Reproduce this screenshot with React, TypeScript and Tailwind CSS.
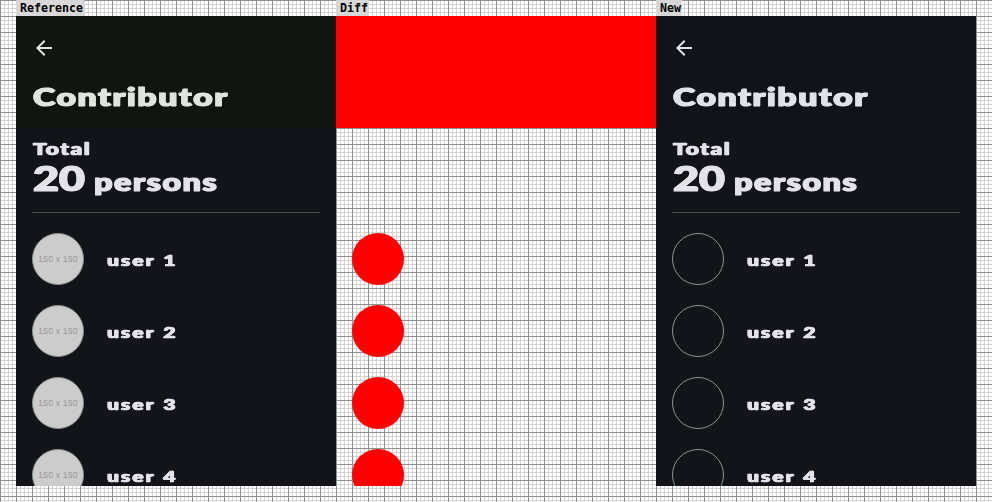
const GRID =
  "bg-[linear-gradient(90deg,#929292_1px,transparent_1px),linear-gradient(#929292_1px,transparent_1px),linear-gradient(90deg,#d4d4d4_1px,transparent_1px),linear-gradient(#d4d4d4_1px,transparent_1px)] bg-[size:16px_16px,16px_16px,4px_4px,4px_4px]";

const display =
  "block w-max origin-left whitespace-pre will-change-transform font-['Lato','Liberation_Sans',sans-serif] font-black";

const heavy =
  "[-webkit-text-stroke:1.2px_currentColor] [text-shadow:0.9px_0_currentColor,-0.5px_0_currentColor]";
const heavySmall =
  "[-webkit-text-stroke:0.7px_currentColor] [text-shadow:0.7px_0_currentColor,-0.4px_0_currentColor]";

function Label({ text }: { text: string }) {
  return (
    <div className="h-4 w-80">
      <span className="block h-4 w-max bg-[#d8d8d8] pl-1 pr-px font-['DejaVu_Sans_Mono',monospace] text-[11.63px] font-bold leading-[17px] text-black">
        {text}
      </span>
    </div>
  );
}

function Phone({ reference = false }: { reference?: boolean }) {
  const ink = reference ? "text-[#dfe4dc]" : "text-[#e1e2e9]";
  return (
    <section className="h-[470px] w-80 overflow-hidden bg-[#121419] text-[#e2e2e9]">
      <header className={`h-28 px-4 pt-5 ${ink} ${reference ? "bg-[#101510]" : "bg-[#101419]"}`}>
        <svg className="block h-6 w-6" viewBox="0 0 24 24" fill="currentColor">
          <path d="M20 11H7.83l5.59-5.59L12 4l-8 8 8 8 1.41-1.41L7.83 13H20z" />
        </svg>
        <h1 className={`${display} ${heavy} ml-px mt-[21px] scale-x-[1.36] text-[24.5px] leading-8 tracking-[1.35px]`}>
          Contributor
        </h1>
      </header>
      <div className="px-4 pt-3">
        <p className={`${display} ${heavySmall} ml-px h-4 scale-x-[1.4] text-[16px] leading-[18px] tracking-[1.3px]`}>Total</p>
        <div className="flex h-14 items-baseline">
          <div className="w-[61px]">
            <span className={`${display} ${heavy} ml-px scale-x-[1.33] text-[33.5px] leading-[44px]`}>20</span>
          </div>
          <span className={`${display} ${heavy} ml-px scale-x-[1.33] text-[24px] leading-8 tracking-[1.3px]`}>persons</span>
        </div>
        <div className="h-px bg-[#3f4947]" />
      </div>
      <ul className="pt-[20px]">
        {[1, 2, 3, 4].map((n) => (
          <li key={n} className="flex h-[72px] items-start px-4">
            <div
              className={`flex h-[52px] w-[52px] shrink-0 items-center justify-center rounded-full border border-[#89938f] ${reference ? "bg-[#cccccc]" : ""}`}
            >
              {reference && (
                <span className="whitespace-nowrap font-['Liberation_Sans',sans-serif] text-[8.6px] leading-none tracking-[0.2px] text-[#999999]">
                  150 x 150
                </span>
              )}
            </div>
            <span className={`${display} ${heavySmall} ml-[23px] mt-[17px] scale-x-[1.34] text-[15.5px] leading-5 tracking-[1.6px] [word-spacing:0.8px]`}>
              {`user ${n}`}
            </span>
          </li>
        ))}
      </ul>
    </section>
  );
}

function Diff() {
  return (
    <section className="h-[470px] w-80 overflow-hidden">
      <div className="h-28 bg-[#ff0000]" />
      <div className="flex flex-col gap-5 pl-4 pt-[105px]">
        {[1, 2, 3, 4].map((n) => (
          <div key={n} className="h-[52px] w-[52px] shrink-0 rounded-full bg-[#ff0000]" />
        ))}
      </div>
    </section>
  );
}

export default function App() {
  return (
    <main className={`h-[502px] w-[992px] overflow-hidden bg-white px-4 ${GRID}`}>
      <div className="flex">
        <Label text="Reference" />
        <Label text="Diff" />
        <Label text="New" />
      </div>
      <div className="flex">
        <Phone reference />
        <Diff />
        <Phone />
      </div>
    </main>
  );
}
